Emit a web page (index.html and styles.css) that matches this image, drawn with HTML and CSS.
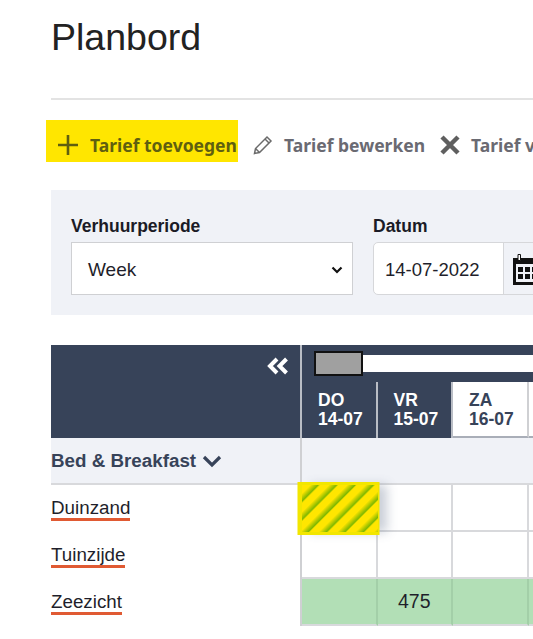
FILE: index.html
```html
<!DOCTYPE html>
<html lang="nl">
<head>
<meta charset="utf-8">
<title>Planbord</title>
<link rel="stylesheet" href="styles.css">
</head>
<body>
<main class="page">
  <h1 class="title">Planbord</h1>
  <hr class="rule">
  <div class="toolbar">
    <button class="tool tool-add">
      <svg class="icon-plus" width="22" height="22" viewBox="0 0 22 22"><path d="M11 1v20M1 11h20" stroke="#5f5f10" stroke-width="2.6" fill="none"/></svg>
      <span>Tarief toevoegen</span>
    </button>
    <button class="tool">
      <svg width="22" height="22" viewBox="0 0 22 22" fill="none" stroke="#6b6b6b" stroke-width="1.5"><path d="M2.5 19.5l1-5L15 3l4 4L7.5 18.500z"/><path d="M13 5l4 4M3.500 14.500l4 4"/></svg>
      <span>Tarief bewerken</span>
    </button>
    <button class="tool">
      <svg width="22" height="22" viewBox="0 0 22 22"><path d="M3 3l16 16M19 3L3 19" stroke="#5f5f5f" stroke-width="4.500" fill="none"/></svg>
      <span>Tarief verwijderen</span>
    </button>
  </div>
  <section class="filters">
    <div class="field field-period">
      <label class="label">Verhuurperiode</label>
      <div class="select">
        <span>Week</span>
        <svg width="12" height="8" viewBox="0 0 12 8"><path d="M1.500 1.500L6 6l4.500-4.500" stroke="#111" stroke-width="2.200" fill="none"/></svg>
      </div>
    </div>
    <div class="field">
      <label class="label">Datum</label>
      <div class="date">
        <span class="date-value">14-07-2022</span>
        <span class="date-btn">
          <svg width="24" height="32" viewBox="0 0 24 32"><path d="M0 5h24v27H0z" fill="#111"/><path d="M3 11h21v18H3z" fill="#f0f2f7"/><path d="M5 14h5v5H5zM12 14h5v5h-5zM19 14h5v5h-5zM5 21h5v5H5zM12 21h5v5h-5zM19 21h5v5h-5z" fill="#111"/><path d="M5 1.500h2.500v6H5z" fill="#fff" stroke="#111"/></svg>
        </span>
      </div>
    </div>
  </section>
  <section class="board">
    <div class="board-head">
      <div class="collapse">
        <svg width="22" height="18" viewBox="0 0 22 18"><path d="M10 2L3 9l7 7M19.500 2l-7 7 7 7" stroke="#fff" stroke-width="4" fill="none"/></svg>
      </div>
      <div class="timeline">
        <div class="scroller"><div class="thumb"></div><div class="track"></div></div>
        <div class="days">
          <div class="day">DO<br>14-07</div>
          <div class="day">VR<br>15-07</div>
          <div class="day day-light">ZA<br>16-07</div>
          <div class="day day-light"></div>
        </div>
      </div>
    </div>
    <div class="row row-group">
      <div class="name group-name">Bed &amp; Breakfast
        <svg width="20" height="13" viewBox="0 0 20 13"><path d="M2 2l8 8 8-8" stroke="#374359" stroke-width="3.200" fill="none"/></svg>
      </div>
      <div class="group-cells"></div>
    </div>
    <div class="row">
      <div class="name"><a class="unit">Duinzand</a></div>
      <div class="cell cell-marked"></div><div class="cell"></div><div class="cell"></div><div class="cell"></div>
    </div>
    <div class="row">
      <div class="name"><a class="unit">Tuinzijde</a></div>
      <div class="cell"></div><div class="cell"></div><div class="cell"></div><div class="cell"></div>
    </div>
    <div class="row row-last">
      <div class="name"><a class="unit">Zeezicht</a></div>
      <div class="cell cell-green"></div><div class="cell cell-green">475</div><div class="cell cell-green"></div><div class="cell cell-green"></div>
    </div>
  </section>
</main>
</body>
</html>
```
FILE: styles.css
```css
html, body {
  margin: 0;
  height: 100%;
  overflow: hidden;
  background: #fff;
}
.page {
  width: 800px;
  padding-left: 51px;
  font-family: "Liberation Sans", Arial, sans-serif;
  color: #1f1f2b;
}
.title {
  margin: 0;
  padding-top: 16px;
  height: 98px;
  box-sizing: border-box;
  font-size: 37.5px;
  line-height: 42px;
  font-weight: 400;
  color: #222;
}
.rule {
  margin: 0;
  border: 0;
  border-top: 2px solid #e3e3e3;
}
.toolbar {
  display: flex;
  align-items: stretch;
  height: 42px;
  margin: 20px 0 28px -5px;
}
.tool {
  display: flex;
  align-items: center;
  gap: 10px;
  margin: 0;
  padding: 8px 14px 0 0;
  border: 0;
  background: none;
  font-family: "Noto Sans", sans-serif;
  font-size: 17.5px;
  font-weight: 700;
  color: #6a6a72;
  white-space: nowrap;
}
.tool-add {
  width: 192px;
  gap: 11px;
  padding: 8px 0 0 11px;
  margin-right: 14px;
  background: #ffe600;
  color: #5f5f10;
}
.filters {
  display: flex;
  gap: 20px;
  box-sizing: border-box;
  height: 125px;
  padding: 26px 0 0 20px;
  background: #f0f2f7;
}
.field { display: flex; flex-direction: column; }
.field-period { width: 282px; }
.label {
  font-size: 17.5px;
  line-height: 20px;
  margin-bottom: 6px;
  font-weight: 700;
  color: #1b1b26;
}
.select {
  display: flex;
  justify-content: space-between;
  align-items: center;
  box-sizing: border-box;
  height: 53px;
  padding: 2px 9px 0 16px;
  background: #fff;
  border: 1px solid #cfd0d3;
  font-size: 19px;
}
.date {
  display: flex;
  height: 53px;
  box-sizing: border-box;
  width: 300px;
  background: #fff;
  border: 1px solid #d6d7da;
  border-radius: 5px;
  font-size: 18.5px;
  align-items: stretch;
}
.date-value {
  width: 130px;
  box-sizing: border-box;
  padding-left: 11px;
  line-height: 53px;
  border-right: 1px solid #d6d7da;
}
.date-btn {
  display: flex;
  align-items: center;
  padding-left: 9px;
  background: #f0f2f7;
  flex: 1;
}
.board { margin-top: 30px; }
.board-head {
  display: flex;
  height: 93px;
  background: #374359;
}
.collapse {
  box-sizing: border-box;
  width: 251px;
  height: 93px;
  padding: 12px 11px 0 0;
  display: flex;
  justify-content: flex-end;
  align-items: flex-start;
  border-right: 2px solid #b9bdc5;
}
.timeline {
  display: flex;
  flex-direction: column;
  flex: 1;
  min-width: 0;
}
.scroller {
  display: flex;
  align-items: center;
  height: 37px;
  padding-left: 12px;
  flex: none;
}
.thumb {
  box-sizing: border-box;
  width: 49px;
  height: 25px;
  background: #a0a0a0;
  border: 2px solid #111;
  flex: none;
}
.track {
  flex: 1;
  height: 17px;
  background: #fff;
}
.days {
  display: flex;
  height: 56px;
}
.day {
  box-sizing: border-box;
  width: 75.5px;
  padding: 9px 0 0 16px;
  font-size: 17.5px;
  line-height: 19px;
  font-weight: 700;
  color: #fff;
  border-right: 2px solid #b9bdc5;
}
.day-light {
  background: #fff;
  color: #374359;
  border-right-color: #cfd0d3;
  border-bottom: 2px solid #a9aeb8;
}
.row {
  display: flex;
  height: 47px;
}
.row-group {
  background: #f0f2f7;
  border-bottom: 2px solid #d8d9dc;
  box-sizing: border-box;
}
.group-cells {
  flex: 1;
}
.name {
  box-sizing: border-box;
  width: 251px;
  flex: none;
  display: flex;
  align-items: center;
  padding-top: 1px;
  font-size: 18.8px;
  border-right: 2px solid #cfd0d3;
}
.group-name {
  gap: 6px;
  font-weight: 700;
  color: #374359;
}
.unit {
  color: #1f1f2b;
  line-height: 21px;
  border-bottom: 3px solid #e05a33;
}
.cell {
  box-sizing: border-box;
  width: 75.5px;
  flex: none;
  border-right: 2px solid #d8d9dc;
  border-bottom: 2px solid #d8d9dc;
  text-align: center;
  font-size: 19.5px;
  line-height: 45px;
}
.cell-green {
  background: #b2dfb6;
  border-right-color: #a3cfa8;
}
.cell-marked {
  position: relative;
  z-index: 1;
  background: repeating-linear-gradient(135deg, #ffe600 0 6px, #e6dc00 7px, #7fb800 11.500px, #d8d800 12.500px, #ffe600 13px);
  border: 0;
  box-shadow: -1.500px 0 0 3px #f2e600, 9px 0 10px rgba(80, 95, 125, 0.3);
}
```
